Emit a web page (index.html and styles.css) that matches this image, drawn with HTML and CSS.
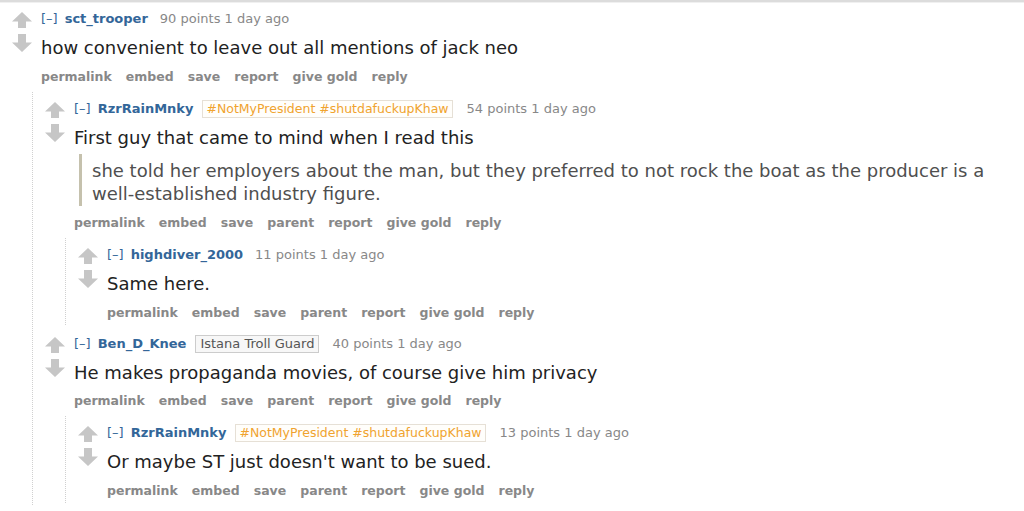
FILE: index.html
```html
<!DOCTYPE html>
<html>
<head>
<meta charset="utf-8">
<link rel="stylesheet" href="styles.css">
</head>
<body>
<div class="topbar"></div>
<div class="comment root">
  <div class="row">
    <div class="arrows"><svg width="20" height="41" viewBox="0 0 20 41"><path d="M10 0 L20 9.5 L14 9.5 L14 16 L6 16 L6 9.5 L0 9.5 Z M6 22 L14 22 L14 30.5 L20 30.5 L10 40 L0 30.5 L6 30.5 Z" fill="#c6c6c6"/></svg></div>
    <div class="entry">
      <p class="tagline"><span class="expand">[–]</span><span class="author">sct_trooper</span><span class="score">90 points 1 day ago</span></p>
      <div class="md"><p>how convenient to leave out all mentions of jack neo</p></div>
      <ul class="buttons"><li>permalink</li><li>embed</li><li>save</li><li>report</li><li>give gold</li><li>reply</li></ul>
    </div>
  </div>
  <div class="children">
    <div class="comment">
      <div class="row">
        <div class="arrows"><svg width="20" height="41" viewBox="0 0 20 41"><path d="M10 0 L20 9.5 L14 9.5 L14 16 L6 16 L6 9.5 L0 9.5 Z M6 22 L14 22 L14 30.5 L20 30.5 L10 40 L0 30.5 L6 30.5 Z" fill="#c6c6c6"/></svg></div>
        <div class="entry">
          <p class="tagline"><span class="expand">[–]</span><span class="author">RzrRainMnky</span><span class="flair orange">#NotMyPresident #shutdafuckupKhaw</span><span class="score">54 points 1 day ago</span></p>
          <div class="md"><p>First guy that came to mind when I read this</p>
            <blockquote><p>she told her employers about the man, but they preferred to not rock the boat as the producer is a well-established industry figure.</p></blockquote>
          </div>
          <ul class="buttons"><li>permalink</li><li>embed</li><li>save</li><li>parent</li><li>report</li><li>give gold</li><li>reply</li></ul>
        </div>
      </div>
      <div class="children">
        <div class="comment">
          <div class="row">
            <div class="arrows"><svg width="20" height="41" viewBox="0 0 20 41"><path d="M10 0 L20 9.5 L14 9.5 L14 16 L6 16 L6 9.5 L0 9.5 Z M6 22 L14 22 L14 30.5 L20 30.5 L10 40 L0 30.5 L6 30.5 Z" fill="#c6c6c6"/></svg></div>
            <div class="entry">
              <p class="tagline"><span class="expand">[–]</span><span class="author">highdiver_2000</span><span class="score">11 points 1 day ago</span></p>
              <div class="md"><p>Same here.</p></div>
              <ul class="buttons"><li>permalink</li><li>embed</li><li>save</li><li>parent</li><li>report</li><li>give gold</li><li>reply</li></ul>
            </div>
          </div>
        </div>
      </div>
    </div>
    <div class="comment">
      <div class="row">
        <div class="arrows"><svg width="20" height="41" viewBox="0 0 20 41"><path d="M10 0 L20 9.5 L14 9.5 L14 16 L6 16 L6 9.5 L0 9.5 Z M6 22 L14 22 L14 30.5 L20 30.5 L10 40 L0 30.5 L6 30.5 Z" fill="#c6c6c6"/></svg></div>
        <div class="entry">
          <p class="tagline"><span class="expand">[–]</span><span class="author">Ben_D_Knee</span><span class="flair gray">Istana Troll Guard</span><span class="score">40 points 1 day ago</span></p>
          <div class="md"><p>He makes propaganda movies, of course give him privacy</p></div>
          <ul class="buttons"><li>permalink</li><li>embed</li><li>save</li><li>parent</li><li>report</li><li>give gold</li><li>reply</li></ul>
        </div>
      </div>
      <div class="children">
        <div class="comment">
          <div class="row">
            <div class="arrows"><svg width="20" height="41" viewBox="0 0 20 41"><path d="M10 0 L20 9.5 L14 9.5 L14 16 L6 16 L6 9.5 L0 9.5 Z M6 22 L14 22 L14 30.5 L20 30.5 L10 40 L0 30.5 L6 30.5 Z" fill="#c6c6c6"/></svg></div>
            <div class="entry">
              <p class="tagline"><span class="expand">[–]</span><span class="author">RzrRainMnky</span><span class="flair orange">#NotMyPresident #shutdafuckupKhaw</span><span class="score">13 points 1 day ago</span></p>
              <div class="md"><p>Or maybe ST just doesn't want to be sued.</p></div>
              <ul class="buttons"><li>permalink</li><li>embed</li><li>save</li><li>parent</li><li>report</li><li>give gold</li><li>reply</li></ul>
            </div>
          </div>
        </div>
      </div>
    </div>
  </div>
</div>
</body>
</html>
```
FILE: styles.css
```css
body {
  margin: 0;
  background: #fff;
  font-family: "DejaVu Sans", Verdana, sans-serif;
}
.topbar {
  height: 2px;
  background: #dcdcdc;
  border-bottom: 1px solid #f0f0f0;
}
.comment {
  padding: 7px 0 2px 12px;
}
.comment.root {
  padding-top: 6px;
}
.row {
  display: flex;
  gap: 9px;
}
.arrows {
  width: 20px;
  flex: none;
  padding-top: 3px;
}
.arrows svg {
  display: block;
}
.entry {
  flex: 1;
  min-width: 0;
}
.tagline {
  margin: 0;
  font-size: 13px;
  line-height: 20px;
  color: #888;
  white-space: nowrap;
  display: flex;
  align-items: center;
}
.expand {
  color: #369;
  margin-right: 7px;
}
.author {
  color: #369;
  font-weight: bold;
  margin-right: 12px;
}
.flair {
  font-size: 12.5px;
  line-height: 16px;
  padding: 0 3px;
  margin: 0 14px 0 -3px;
  border: 1px solid #ddd;
}
.flair.orange {
  color: #f0a32e;
  background: #fffefb;
  border-color: #e6e0d6;
}
.flair.gray {
  color: #555;
  background: #f7f7f7;
  border-color: #ccc;
  font-size: 13px;
  padding: 0 4px;
  margin-right: 13px;
}
.md {
  font-size: 18px;
  line-height: 23px;
  color: #222;
  margin-top: 7px;
}
.md p {
  margin: 0;
}
.md blockquote {
  margin: 5px 0 0 5px;
  border-left: 3px solid #c5c1ad;
  padding: 5px 0 1px 10px;
  color: #4f4f4f;
}
.buttons {
  list-style: none;
  margin: 7.5px 0 0;
  padding: 0;
  display: flex;
  gap: 14px;
  font-size: 12.5px;
  font-weight: bold;
  color: #888;
  line-height: 20px;
}
.children {
  margin: 5px 0 0 20px;
  border-left: 1px dotted #d0d0d0;
}
```
